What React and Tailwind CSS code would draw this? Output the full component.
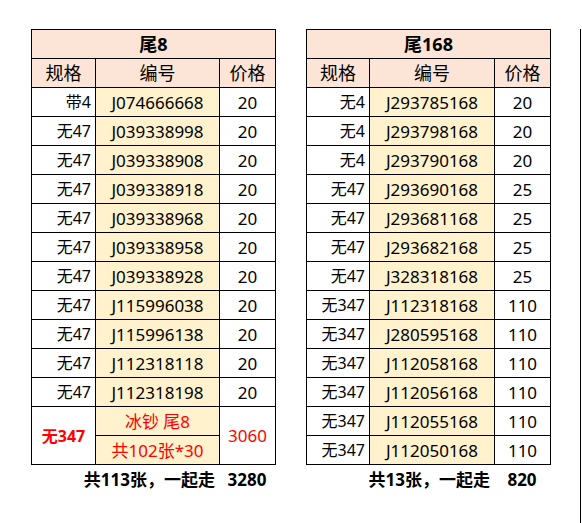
import React from "react";

const left = [
  ["带4", "J074666668", "20"],
  ["无47", "J039338998", "20"],
  ["无47", "J039338908", "20"],
  ["无47", "J039338918", "20"],
  ["无47", "J039338968", "20"],
  ["无47", "J039338958", "20"],
  ["无47", "J039338928", "20"],
  ["无47", "J115996038", "20"],
  ["无47", "J115996138", "20"],
  ["无47", "J112318118", "20"],
  ["无47", "J112318198", "20"],
];

const right = [
  ["无4", "J293785168", "20"],
  ["无4", "J293798168", "20"],
  ["无4", "J293790168", "20"],
  ["无47", "J293690168", "25"],
  ["无47", "J293681168", "25"],
  ["无47", "J293682168", "25"],
  ["无47", "J328318168", "25"],
  ["无347", "J112318168", "110"],
  ["无347", "J280595168", "110"],
  ["无347", "J112058168", "110"],
  ["无347", "J112056168", "110"],
  ["无347", "J112055168", "110"],
  ["无347", "J112050168", "110"],
];

function Table({ title, rows, cols, extra, total, sum }) {
  return (
    <div className="flex flex-col">
      <table className="border-collapse table-fixed" style={{ width: cols[0] + cols[1] + cols[2] + 1 }}>
        <colgroup>
          <col style={{ width: cols[0] }} />
          <col style={{ width: cols[1] }} />
          <col style={{ width: cols[2] }} />
        </colgroup>
        <thead>
          <tr className="h-[29px] bg-[#fce4d6]">
            <th colSpan={3} className="border border-black p-0 text-center font-bold text-[18px] leading-none">
              {title}
            </th>
          </tr>
          <tr className="h-[29px] bg-[#fce4d6]">
            <th className="border border-black p-0 text-center font-normal text-[18px] leading-none">规格</th>
            <th className="border border-black p-0 text-center font-normal text-[18px] leading-none">编号</th>
            <th className="border border-black p-0 text-center font-normal text-[18px] leading-none">价格</th>
          </tr>
        </thead>
        <tbody>
          {rows.map((r, i) => (
            <tr key={i} className="h-[29px]">
              <td className="border border-black p-0 pr-[4px] text-right text-[16px] leading-none bg-white">{r[0]}</td>
              <td className="border border-black p-0 text-center text-[17px] leading-none bg-[#fff2cc]">{r[1]}</td>
              <td className="border border-black p-0 text-center text-[17px] leading-none bg-white">{r[2]}</td>
            </tr>
          ))}
          {extra && (
            <>
              <tr className="h-[29px]">
                <td rowSpan={2} className="border border-black p-0 text-center text-[16px] font-bold leading-none text-[#ff0000] bg-white">
                  无347
                </td>
                <td className="border border-black p-0 text-center text-[17px] leading-none text-[#ff0000] bg-[#fff2cc]">
                  冰钞 尾8
                </td>
                <td rowSpan={2} className="border border-black p-0 text-center text-[17px] leading-none text-[#ff0000] bg-white">
                  3060
                </td>
              </tr>
              <tr className="h-[29px]">
                <td className="border border-black p-0 text-center text-[17px] leading-none text-[#ff0000] bg-[#fff2cc]">
                  共102张*30
                </td>
              </tr>
            </>
          )}
        </tbody>
      </table>
      <div className="flex h-[29px] items-center font-bold text-[17px] leading-none">
        <div style={{ width: cols[0] }} />
        <div className="flex justify-end pr-[4px] whitespace-nowrap" style={{ width: cols[1] }}>
          <span>{total}</span>
        </div>
        <div className="flex justify-center" style={{ width: cols[2] }}>
          {sum}
        </div>
      </div>
    </div>
  );
}

export default function App() {
  return (
    <div
      className="flex h-[523px] items-start bg-white pt-[29px] pl-[31px] text-black overflow-hidden"
      style={{ fontFamily: '"Noto Sans", "Noto Sans CJK SC", sans-serif' }}
    >
      <Table title="尾8" rows={left} cols={[64, 124, 56]} extra total="共113张，一起走" sum="3280" />
      <div className="w-[30px] shrink-0" />
      <Table title="尾168" rows={right} cols={[63, 125, 56]} total="共13张，一起走" sum="820" />
      <div className="w-[29px] shrink-0" />
      <div className="self-stretch border-l border-black w-px shrink-0" />
    </div>
  );
}
